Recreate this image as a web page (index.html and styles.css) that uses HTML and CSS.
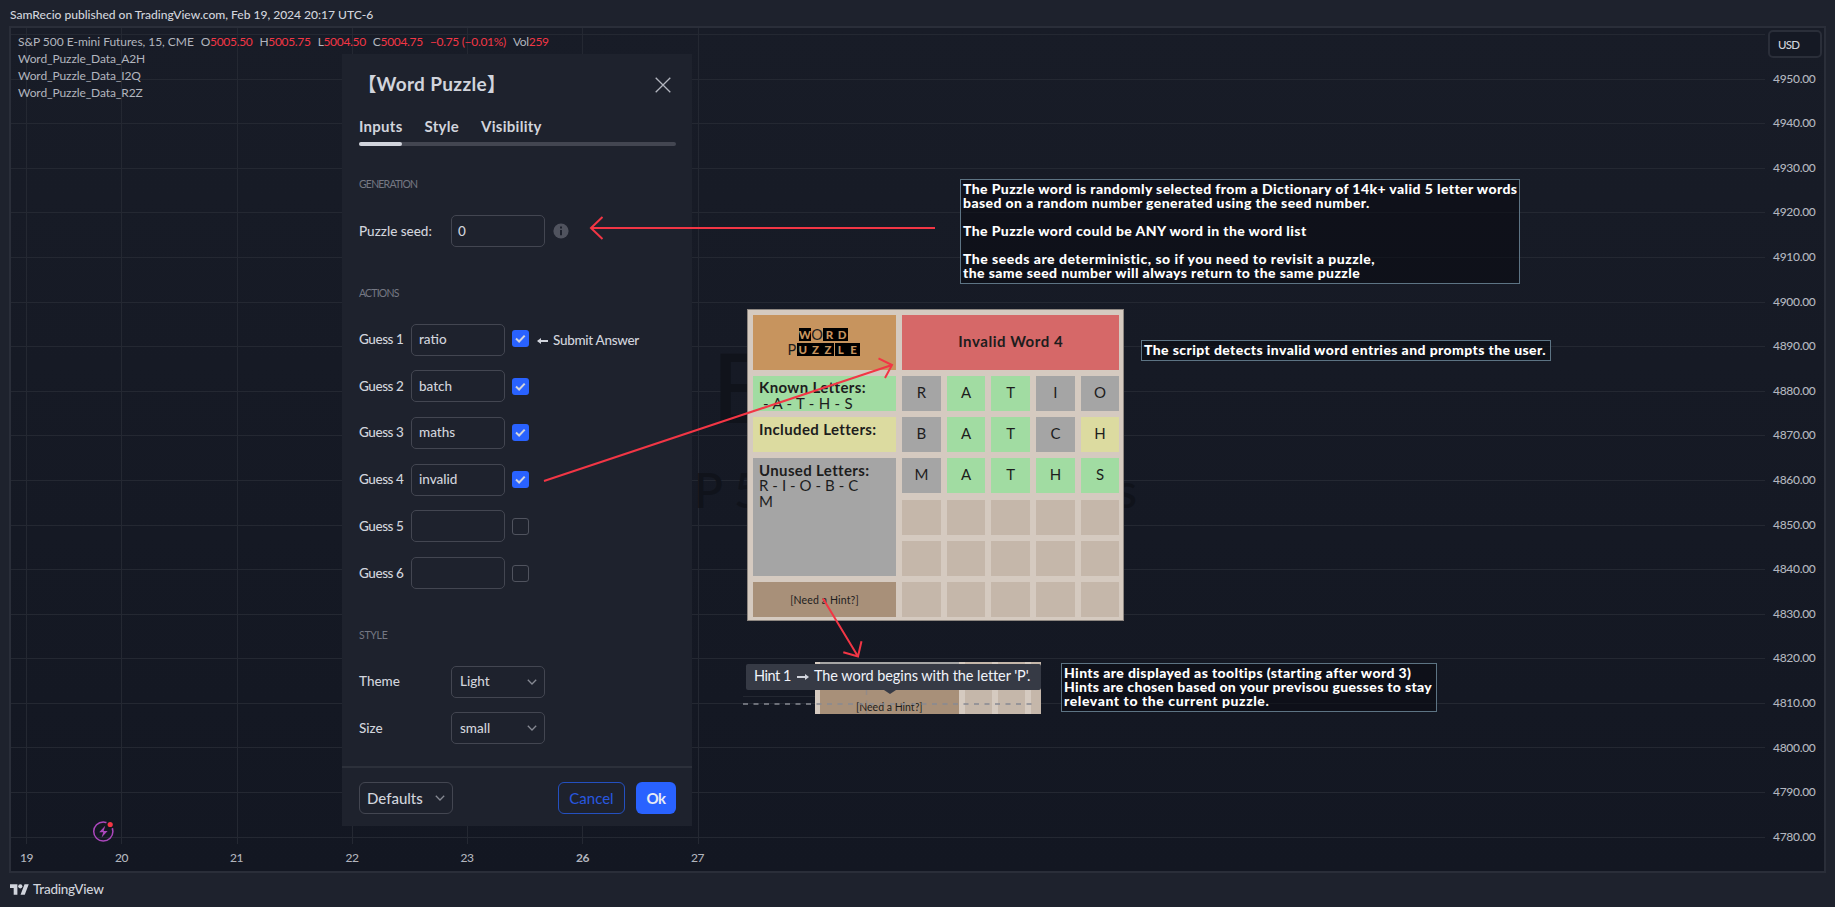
FILE: index.html
```html
<!DOCTYPE html>
<html lang="en">
<head>
<meta charset="utf-8">
<title>S&amp;P 500 E-mini Futures – TradingView</title>
<link rel="stylesheet" href="styles.css">
</head>
<body>
<header class="top">SamRecio published on TradingView.com, Feb 19, 2024 20:17 UTC-6</header>

<main class="chart">
  <svg class="layer" viewBox="11 28 1813 843">
    <path class="gridline" d="M11 34.5H1765M11 79.5H1765M11 123.5H1765M11 168.5H1765M11 212.5H1765M11 257.5H1765M11 302.5H1765M11 346.5H1765M11 391.5H1765M11 435.5H1765M11 480.5H1765M11 525.5H1765M11 569.5H1765M11 614.5H1765M11 658.5H1765M11 703.5H1765M11 747.5H1765M11 792.5H1765M11 837.5H1765"/>
    <path class="gridline" d="M26.5 28V844M121.5 28V844M237.5 28V844M352.5 28V844M467.5 28V844M582.5 28V844M698.5 28V844"/>
    <text class="wm wm-big" x="712" y="423">ES1!, 15</text>
    <text class="wm wm-small" x="691" y="508" text-anchor="end">S&amp;</text>
    <text class="wm wm-small" x="694" y="508" textLength="443">P 500 E-mini Futures</text>
    <g class="times">
      <text x="26.5" y="862">19</text><text x="121.5" y="862">20</text><text x="236.5" y="862">21</text><text x="352" y="862">22</text><text x="467" y="862">23</text><text class="strong" x="582.5" y="862">26</text><text x="697.5" y="862">27</text>
    </g>
    <circle class="bolt-ring" cx="103.3" cy="831.5" r="9.6"/>
    <path class="bolt" d="M105.2 825.8L99.2 832.3H103.2L101.6 837.4L107.6 830.9H103.7Z"/>
    <circle class="dot-gap" cx="110.2" cy="824.5" r="4.2"/>
    <circle class="dot" cx="110.2" cy="824.5" r="2.6"/>
  </svg>

  <section class="legend">
    <div class="row"><span class="sym">S&amp;P 500 E-mini Futures, 15, CME</span><span class="ohlc">O<b>5005.50</b></span><span class="ohlc">H<b>5005.75</b></span><span class="ohlc">L<b>5004.50</b></span><span class="ohlc">C<b>5004.75</b></span><span class="ohlc"><b>−0.75 (−0.01%)</b></span><span class="ohlc">Vol<b>259</b></span></div>
    <div class="row study">Word_Puzzle_Data_A2H</div>
    <div class="row study">Word_Puzzle_Data_I2Q</div>
    <div class="row study">Word_Puzzle_Data_R2Z</div>
  </section>

  <aside class="prices">
    <div class="usd">USD</div>
    <div class="p">4950.00</div><div class="p">4940.00</div><div class="p">4930.00</div><div class="p">4920.00</div><div class="p">4910.00</div><div class="p">4900.00</div><div class="p">4890.00</div><div class="p">4880.00</div><div class="p">4870.00</div><div class="p">4860.00</div><div class="p">4850.00</div><div class="p">4840.00</div><div class="p">4830.00</div><div class="p">4820.00</div><div class="p">4810.00</div><div class="p">4800.00</div><div class="p">4790.00</div><div class="p">4780.00</div>
  </aside>

  <section class="dialog">
    <div class="dlg-head">
      <h1><span class="cjk">【</span><span class="ttl">Word Puzzle</span><span class="cjk">】</span></h1>
      <svg class="close" viewBox="0 0 16 16"><path d="M.7.7L15.3 15.3M15.3.7L.7 15.3"/></svg>
    </div>
    <nav class="tabs"><span>Inputs</span><span>Style</span><span>Visibility</span></nav>
    <div class="track"><i></i></div>

    <h2 class="sec s1">GENERATION</h2>
    <div class="field f-seed"><label>Puzzle seed:</label><div class="box">0</div>
      <svg class="info" viewBox="0 0 16 16"><circle cx="8" cy="8" r="7.6"/><path d="M7 3.6h2v2H7zM7 6.9h2v5.4H7z"/></svg>
    </div>

    <h2 class="sec s2">ACTIONS</h2>
    <div class="guesses">
      <div class="guess"><label>Guess 1</label><div class="box">ratio</div><span class="chk on up"><svg viewBox="0 0 17 17"><path d="M4 8.6L7.1 11.5L12.7 5.6"/></svg></span><svg class="arr" viewBox="0 0 11 8"><path d="M1.2 4H11"/><path class="head" d="M0 4L4 1V7Z"/></svg><span class="sub">Submit Answer</span></div>
      <div class="guess"><label>Guess 2</label><div class="box">batch</div><span class="chk on"><svg viewBox="0 0 17 17"><path d="M4 8.6L7.1 11.5L12.7 5.6"/></svg></span></div>
      <div class="guess"><label>Guess 3</label><div class="box">maths</div><span class="chk on"><svg viewBox="0 0 17 17"><path d="M4 8.6L7.1 11.5L12.7 5.6"/></svg></span></div>
      <div class="guess"><label>Guess 4</label><div class="box">invalid</div><span class="chk on"><svg viewBox="0 0 17 17"><path d="M4 8.6L7.1 11.5L12.7 5.6"/></svg></span></div>
      <div class="guess"><label>Guess 5</label><div class="box"></div><span class="chk"></span></div>
      <div class="guess"><label>Guess 6</label><div class="box"></div><span class="chk"></span></div>
    </div>

    <h2 class="sec s3">STYLE</h2>
    <div class="field f-theme"><label>Theme</label><div class="box sel">Light<svg class="chev" viewBox="0 0 10 6"><path d="M.8.8L5 5L9.2.8"/></svg></div></div>
    <div class="field f-size"><label>Size</label><div class="box sel">small<svg class="chev" viewBox="0 0 10 6"><path d="M.8.8L5 5L9.2.8"/></svg></div></div>

    <footer class="dlg-foot">
      <div class="btn def">Defaults<svg class="chev" viewBox="0 0 10 6"><path d="M.8.8L5 5L9.2.8"/></svg></div>
      <div class="btn cancel">Cancel</div>
      <div class="btn ok">Ok</div>
    </footer>
  </section>

  <section class="board">
    <div class="c logo"><div class="ln"><b>W</b><i>O</i><b>R</b><b>D</b></div><div class="ln"><i>P</i><b>U</b><b>Z</b><b>Z</b><b>L</b><b>E</b></div></div>
    <div class="c msg">Invalid Word 4</div>
    <div class="c info-c green"><strong>Known Letters:</strong><span class="lead">- A - T - H - S</span></div>
    <div class="c gray">R</div><div class="c green">A</div><div class="c green">T</div><div class="c gray">I</div><div class="c gray">O</div>
    <div class="c info-c yellow"><strong>Included Letters:</strong></div>
    <div class="c gray">B</div><div class="c green">A</div><div class="c green">T</div><div class="c gray">C</div><div class="c yellow">H</div>
    <div class="c info-c gray unused"><strong>Unused Letters:</strong><span>R - I - O - B - C</span><span>M</span></div>
    <div class="c gray">M</div><div class="c green">A</div><div class="c green">T</div><div class="c green">H</div><div class="c green">S</div>
    <div class="c"></div><div class="c"></div><div class="c"></div><div class="c"></div><div class="c"></div>
    <div class="c"></div><div class="c"></div><div class="c"></div><div class="c"></div><div class="c"></div>
    <div class="c hint">[Need a Hint?]</div>
    <div class="c"></div><div class="c"></div><div class="c"></div><div class="c"></div><div class="c"></div>
  </section>

  <section class="strip"><div class="s-left">[Need a Hint?]</div><div class="s-cell"></div><div class="s-cell"></div><div class="s-cell last"></div></section>
  <svg class="layer" viewBox="11 28 1813 843">
    <path class="gridline" d="M743 696.5H815"/>
    <path class="dash" d="M743 704H1036"/>
    <path class="dash v" d="M866.5 690V714"/>
  </svg>
  <div class="tip"><span class="tip-n">Hint 1</span><svg class="arr2" viewBox="0 0 12 8"><path d="M0 4H10"/><path class="head" d="M12 4L8 1V7Z"/></svg><span class="tip-t">The word begins with the letter 'P'.</span></div>

  <div class="note n1"><p>The Puzzle word is randomly selected from a Dictionary of 14k+ valid 5 letter words</p><p>based on a random number generated using the seed number.</p><p>&nbsp;</p><p>The Puzzle word could be ANY word in the word list</p><p>&nbsp;</p><p class="wide">The seeds are deterministic, so if you need to revisit a puzzle,</p><p>the same seed number will always return to the same puzzle</p></div>
  <div class="note n2"><p>The script detects invalid word entries and prompts the user.</p></div>
  <div class="note n3"><p>Hints are displayed as tooltips (starting after word 3)</p><p class="tight">Hints are chosen based on your previsou guesses to stay</p><p class="wider">relevant to the current puzzle.</p></div>

  <svg class="layer" viewBox="11 28 1813 843">
    <g class="arrows">
      <path d="M935 228H591M602.5 217L591 228L602.5 239"/>
      <path d="M544 481L892 365M878.5 358.3L892 365L885 378"/>
      <path d="M823 598.5L858 656.5M843.3 652.3L858 656.5L861.5 641.3"/>
    </g>
  </svg>
</main>

<footer class="bottom">
  <svg class="tv" viewBox="0 0 36 20"><path d="M14 20H7V7H0V0H14ZM28 20H20L27.5 0H35.5Z"/><circle cx="19.5" cy="4" r="4"/></svg>
  <span>TradingView</span>
</footer>
</body>
</html>
```
FILE: styles.css
```css
* { box-sizing: border-box; margin: 0; padding: 0; }
body { width: 1835px; height: 907px; overflow: hidden; display: flex; flex-direction: column; background: #1e222d; color: #d1d4dc; font: 13px/17px Lato, "Noto Sans", sans-serif; white-space: nowrap; }
b, strong, h1, h2, i { font-style: normal; }

.top { height: 26px; padding-left: 10px; line-height: 29px; font-size: 12.1px; font-weight: 500; letter-spacing: -.03px; }
.bottom { display: flex; align-items: center; height: 34px; padding: 0 0 2px 10px; gap: 4px; font-size: 13.5px; font-weight: 500; letter-spacing: -.25px; }
.tv { width: 19px; height: 11px; fill: #d1d4dc; }

/* Chart canvas */
.chart { position: relative; display: flex; justify-content: space-between; align-items: flex-start; height: 847px; margin: 0 9px; border: 2px solid #2a2e39; background: linear-gradient(#181c27, #131722); }
.layer { position: absolute; inset: 0; width: 1813px; height: 843px; pointer-events: none; }
.gridline { fill: none; stroke: #242832; stroke-width: 1; }
.wm { fill: #10131b; }
.wm-big { font-size: 96px; font-weight: 500; }
.wm-small { font-size: 48px; font-weight: 500; }
.times text { font-size: 12px; font-weight: 500; text-anchor: middle; fill: #b2b5be; letter-spacing: -.4px; }
.times .strong { font-weight: 700; }
.bolt-ring { fill: none; stroke: #ab47bc; stroke-width: 1.5; }
.bolt { fill: #ab47bc; }
.dot-gap { fill: #131722; }
.dot { fill: #f23645; }

.legend { position: relative; padding: 5px 0 0 7px; font-size: 12px; color: #b2b5be; }
.row { display: flex; gap: 7px; height: 17px; align-items: center; }
.row b { font-weight: 400; color: #f23645; }
.sym { letter-spacing: -.04px; }
.ohlc { letter-spacing: -.32px; }
.study { letter-spacing: -.1px; }

.prices { position: relative; width: 57px; padding: 2px 0 0 1px; font-size: 12px; color: #b2b5be; }
.usd { width: 54px; height: 28px; margin-bottom: -1.3px; padding-left: 8px; line-height: 25px; border: 2px solid #2a2e39; border-radius: 5px; color: #d1d4dc; font-size: 11.5px; letter-spacing: -.8px; font-weight: 500; background: #151924; }
.p { height: 44.6px; padding-left: 5px; line-height: 44.6px; font-weight: 500; letter-spacing: -.3px; }

/* Settings dialog */
.dialog { position: absolute; left: 331px; top: 26px; width: 350px; height: 772px; padding: 0 16px 0 17px; background: #1e222d; font-size: 13.5px; font-weight: 500; }
.dlg-head { display: flex; justify-content: space-between; align-items: center; height: 62px; padding-right: 5px; }
h1 { display: flex; align-items: center; margin: -2px 0 0 -1.5px; font-size: 19px; line-height: 24px; font-weight: 700; }
.ttl { letter-spacing: .35px; }
.cjk { font-family: "Noto Sans CJK JP", sans-serif; font-size: 19px; }
.close { width: 16px; height: 16px; fill: none; stroke: #b2b5be; stroke-width: 1.3; }
.tabs { display: flex; gap: 22px; height: 26px; line-height: 20px; font-size: 15px; font-weight: 700; letter-spacing: .27px; }
.track { height: 4px; border-radius: 2px; background: #434651; }
.track i { display: block; width: 43px; height: 4px; border-radius: 2px; background: #d1d4dc; }
.sec { height: 16px; line-height: 16px; font-size: 10.5px; font-weight: 400; letter-spacing: -.8px; color: #757883; }
.s1 { margin-top: 30px; }
.s2 { margin-top: 38px; }
.s3 { margin-top: 38px; letter-spacing: -.3px; }
.field { display: flex; align-items: center; height: 32px; }
.field label { width: 92px; }
.f-seed { margin-top: 23px; }
.f-theme { margin-top: 22.5px; }
.f-size { margin-top: 14.5px; }
.box { display: flex; align-items: center; width: 94px; height: 32px; padding: 0 7px; border: 1px solid #434651; border-radius: 5px; }
.f-seed .box { padding-left: 6px; }
.sel { justify-content: space-between; padding: 0 7px 0 8px; }
.info { width: 16px; height: 16px; margin-left: 8px; fill: #50535e; }
.info path { fill: #1e222d; }
.chev { width: 10px; height: 6px; fill: none; stroke: #868993; stroke-width: 1.3; }
.guesses { margin-top: 22.6px; }
.guess { display: flex; align-items: center; height: 32px; margin-bottom: 14.7px; }
.guess label { width: 52px; letter-spacing: -.42px; }
.chk { width: 17px; height: 17px; margin-left: 7px; border: 1px solid #50535e; border-radius: 3px; }
.chk.on { border: 0; background: #2962ff; }
.chk.up { margin-top: -3px; }
.chk svg { display: block; width: 17px; height: 17px; fill: none; stroke: #d1d4dc; stroke-width: 2; }
.arr { width: 11px; height: 8px; margin: 2px 5px 0 8px; stroke: #d1d4dc; stroke-width: 2; }
.arr .head, .arr2 .head { stroke: none; fill: #d1d4dc; }
.sub { padding-top: 1px; letter-spacing: -.3px; }
.dlg-foot { display: flex; align-items: center; height: 60px; margin: 21.9px -16px 0 -17px; padding: 3px 16px 0 17px; border-top: 2px solid #2c303a; font-size: 15px; }
.btn { display: flex; align-items: center; justify-content: center; height: 32px; border: 1px solid #434651; border-radius: 6px; }
.def { justify-content: space-between; width: 94px; padding: 0 7px; }
.cancel { width: 67px; margin-left: auto; border-color: #2450c0; color: #2858e0; font-weight: 400; }
.ok { width: 40px; margin-left: 11px; border: 0; background: #2962ff; color: #e8ebf5; font-weight: 700; letter-spacing: -.6px; }

/* Puzzle board */
.board { position: absolute; left: 736px; top: 281px; display: grid; grid-template-columns: 143px repeat(5, 38.7px); grid-template-rows: 54.5px repeat(6, 35px); column-gap: 6px; row-gap: 6.3px; width: 377px; height: 312px; padding: 5px; border: 1px solid #8e8781; background: #d5cac0; color: #1d1d1d; font-size: 15px; line-height: 15.5px; }
.c { display: flex; align-items: center; justify-content: center; padding-bottom: 2px; background: #c5b7aa; overflow: hidden; }
.c.gray { background: #a5a5a5; }
.c.green { background: #a1dca2; }
.c.yellow { background: #dcdba0; }
.c.logo { flex-direction: column; gap: 1.5px; padding: 0 2px 0 0; background: #c7945e; }
.ln { display: flex; align-items: center; height: 13.5px; gap: .5px; }
.ln b { width: 12.2px; height: 13px; line-height: 13px; text-align: center; font-size: 11.5px; font-weight: 900; background: #000; color: #c7945e; }
.ln i { font-size: 14.5px; }
.c.msg { grid-column: 2 / 7; background: #d66868; font-weight: 700; letter-spacing: .55px; }
.c.info-c { flex-direction: column; align-items: flex-start; justify-content: flex-start; padding: 4.5px 0 0 6px; letter-spacing: .06px; }
.info-c strong { letter-spacing: .36px; }
.info-c .lead { margin-left: 4px; letter-spacing: .27px; }
.unused { grid-row: 4 / 7; grid-column: 1; }
.c.hint { padding: 2px 0 0; background: #a89079; font-size: 10.5px; letter-spacing: .15px; }

/* Tooltip sample */
.strip { position: absolute; left: 804px; top: 634px; display: flex; gap: 6px; width: 226px; height: 52px; padding-left: 5px; background: #d5cac0; }
.s-left { width: 139px; padding: 35px 0 0 36px; line-height: 20px; font-size: 10.5px; color: #1d1d1d; overflow: hidden; background: linear-gradient(#a5a5a5 20px, #a89079 20px); }
.s-cell { width: 27px; background: #c5b7aa; }
.s-cell.last { width: 10px; }
.dash { fill: none; stroke: #868993; stroke-width: 1.4; stroke-dasharray: 5 5.5; }
.dash.v { opacity: .6; }
.tip { position: absolute; left: 735px; top: 636px; display: flex; align-items: center; width: 295px; height: 26px; padding: 0 0 3px 8px; border-radius: 2px; background: #363a45; color: #f0f3fa; font-size: 14.5px; }
.tip-n { width: 43px; letter-spacing: -.45px; }
.tip-t { letter-spacing: -.08px; }
.tip::after { content: ""; position: absolute; left: 138px; top: 26px; border: 6px solid transparent; border-top: 4px solid #363a45; border-bottom: 0; }
.arr2 { width: 12px; height: 8px; margin: 2px 5px 0 0; stroke: #d1d4dc; stroke-width: 2; }

/* Annotations */
.note { position: absolute; padding: 2px 2px; border: 1px solid #5d7484; background: rgba(10, 12, 18, .6); color: #fff; font-size: 14px; font-weight: 900; line-height: 14px; letter-spacing: .4px; }
.n1 { left: 949px; top: 151px; width: 560px; height: 105px; }
.n2 { left: 1130px; top: 312px; width: 410px; height: 21px; }
.n3 { left: 1050px; top: 635px; width: 376px; height: 49px; letter-spacing: .38px; }
.note .wide { letter-spacing: .5px; }
.note .tight { letter-spacing: .32px; }
.note .wider { letter-spacing: .58px; }
.arrows { fill: none; stroke: #f23645; stroke-width: 2; }
```
